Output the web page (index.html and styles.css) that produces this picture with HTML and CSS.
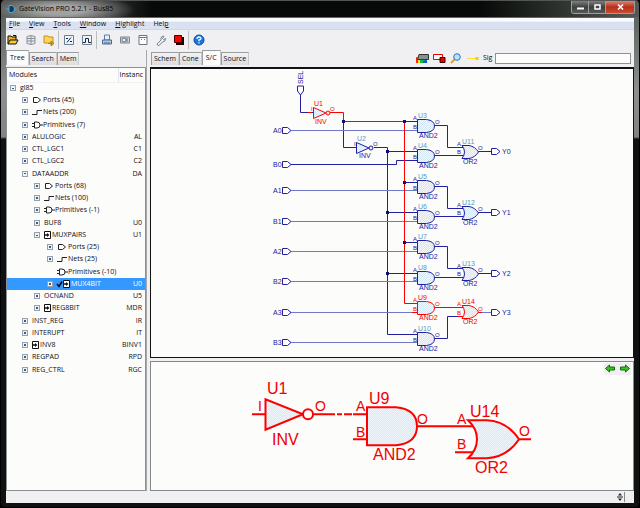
FILE: index.html
```html
<!DOCTYPE html>
<html lang="en">
<head>
<meta charset="utf-8">
<title>GateVision PRO 5.2.1 - Bus85</title>
<link rel="stylesheet" href="styles.css">
</head>
<body>
<svg class="defs" aria-hidden="true">
  <defs>
    <pattern id="hatch" width="2" height="2" patternUnits="userSpaceOnUse"><rect width="2" height="2" fill="#f4f8fb"/><rect width="1" height="1" fill="#d4e6f2"/><rect x="1" y="1" width="1" height="1" fill="#d4e6f2"/></pattern>
    <symbol id="i-port" viewBox="0 0 11 10"><path d="M1.500 2.500h4l3 2.500-3 2.500h-4z" fill="#fff" stroke="#222"/></symbol>
    <symbol id="i-net" viewBox="0 0 11 10"><path d="M0 7.500h5v-4h5" fill="none" stroke="#222"/></symbol>
    <symbol id="i-prim" viewBox="0 0 11 10"><path d="M0 3.500h2M0 6.500h2M8 5h3M2.500 2v6h2.500q3 0 3-3t-3-3z" fill="#fff" stroke="#222"/></symbol>
    <symbol id="i-mod" viewBox="0 0 8 10"><path d="M.5 1.500h6v7h-6z" fill="#fff" stroke="#111"/><path d="M1 5h3" stroke="#111" stroke-width="1.500"/><path d="M3 3 5.500 5 3 7z" fill="#111"/></symbol>
    <symbol id="i-check" viewBox="0 0 7 10"><path d="m1 5 2 2.500 3-5" fill="none" stroke="#001" stroke-width="1.500"/></symbol>
    <symbol id="and" viewBox="0 0 18 14" overflow="visible"><path d="M.5.500h9q8 1 8 6.500t-8 6.500h-9z"/></symbol>
    <symbol id="or" viewBox="0 0 17 14" overflow="visible"><path d="M0 .500h7q6 1 9.500 6.500-3.500 5.500-9.500 6.500h-7q5-6.500 0-13z"/></symbol>
    <symbol id="inv" viewBox="0 0 18 12" overflow="visible"><path d="M.5.500v11L13 6z"/><circle cx="15" cy="6" r="2"/></symbol>
    <symbol id="pin" viewBox="0 0 9 7" overflow="visible"><path d="M.5.500h5l3.500 3-3.500 3h-5z" fill="#fff"/></symbol>
  </defs>
</svg>
<div class="window">
  <header class="titlebar">
    <svg class="logo" viewBox="0 0 10 10"><path d="M0 5h3M8 5h2M3 1.500h3q2.500 1 2.500 3.500t-2.500 3.500h-3z" fill="#173a50" stroke="#4aa7d8"/></svg>
    <h1>GateVision PRO 5.2.1 - Bus85</h1>
    <div class="winbtns">
      <button aria-label="Minimize"><svg viewBox="0 0 9 8"><path d="M1 5.500h7" stroke="#fff" stroke-width="2"/></svg></button>
      <button aria-label="Maximize"><svg viewBox="0 0 9 8"><path d="M2 2h5v4h-5z" fill="none" stroke="#fff" stroke-width="1.500"/></svg></button>
      <button class="close" aria-label="Close"><svg viewBox="0 0 9 8"><path d="m2 1.500 5 5m0-5-5 5" stroke="#fff" stroke-width="1.700"/></svg></button>
    </div>
  </header>
  <div class="client">
    <nav class="menu">
      <button><u>F</u>ile</button><button><u>V</u>iew</button><button><u>T</u>ools</button><button><u>W</u>indow</button><button><u>H</u>ighlight</button><button>Hel<u>p</u></button>
    </nav>
    <div class="toolbar">
      <button aria-label="Open"><svg viewBox="0 0 12 12"><path d="M1 10V2h3l1 1h4v3" fill="#e8b420" stroke="#111"/><path d="m1 10 2-4h8l-2 4z" fill="#ffc82c" stroke="#111"/><path d="M6 1.500h3v2" fill="none" stroke="#111"/></svg></button>
      <button aria-label="Database"><svg viewBox="0 0 12 12"><path d="M2 2.500q4-2 8 0v7q-4 2-8 0z" fill="#e9ecee" stroke="#879098"/><path d="M2 4.500h8M2 7h8M6 2v8" stroke="#879098"/></svg></button>
      <button aria-label="Load file"><svg viewBox="0 0 12 12"><path d="M1 9V2h4l1 1h4v6z" fill="#ffd45a" stroke="#c18e1c"/><path d="M5 9.500h4M8 7l3 2.500L8 12z" fill="#e0a010" stroke="#b57c10"/></svg></button>
      <span class="sep"></span>
      <button aria-label="Percent"><svg viewBox="0 0 12 12"><path d="M1.500 1.500h9v9h-9z" fill="#eef4fb" stroke="#6a7f98"/><path d="m8 3.500-4 5" stroke="#222"/><path d="M3 4h2v1H3zM7 7h2v1H7z" fill="#222"/></svg></button>
      <button aria-label="Waveform"><svg viewBox="0 0 12 12"><path d="M1.500 1.500h9v9h-9z" fill="#eef4fb" stroke="#6a7f98"/><path d="M2 8.500h2.500v-4h3v4H10" fill="none" stroke="#223"/></svg></button>
      <span class="sep"></span>
      <button aria-label="Print"><svg viewBox="0 0 12 12"><path d="M3.500 1h5v5h-5z" fill="#e5f1ff" stroke="#567fae"/><path d="M1.500 6h9v4h-9z" fill="#b7c5d4" stroke="#546b83"/><path d="M3 9h6" stroke="#2a72c4"/></svg></button>
      <button aria-label="Snapshot"><svg viewBox="0 0 12 12"><path d="M1.500 3h9v6h-9z" fill="#ccd6de" stroke="#788792"/><circle cx="5" cy="6" r="2" fill="#eef" stroke="#63717c"/><path d="M8 4v4" stroke="#63717c"/></svg></button>
      <button aria-label="Page"><svg viewBox="0 0 12 12"><path d="M2 1.500h8v9H2z" fill="#fff" stroke="#687785"/><path d="M2 3.500h8M4 5.500h1m2 0h1" stroke="#687785"/></svg></button>
      <button aria-label="Settings"><svg viewBox="0 0 12 12"><path d="m2 10 4-4q-1-3 2-4l1 .5-1.500 2 1 1 2-1q.5 3-3 3.500l-4 4z" fill="#eef1f4" stroke="#74808b"/></svg></button>
      <button aria-label="Highlight color"><svg viewBox="0 0 12 12"><path d="M3 3h8v8H3z" fill="#200"/><path d="M1.500 1.500h7v7h-7z" fill="#f00" stroke="#500"/></svg></button>
      <span class="sep"></span>
      <button aria-label="Help"><svg viewBox="0 0 12 12"><circle cx="6" cy="6" r="5" fill="#1976df" stroke="#0b4ca6"/><path d="M4 5q0-2 2-2t2 1.500Q8 5.500 6 6v1.200M6 8.200v1.300" fill="none" stroke="#fff" stroke-width="1.300"/></svg></button>
    </div>
    <div class="workspace">
      <section class="side">
        <div class="tabs"><button class="on">Tree</button><button>Search</button><button>Mem</button></div>
        <div class="treepane">
          <table>
            <thead><tr><th>Modules</th><th class="inst">Instanc</th></tr></thead>
            <tbody>
              <tr><td><div class="l0"><button class="ex minus" aria-label="Collapse"></button>gl85</div></td><td></td></tr>
              <tr><td><div class="l1"><button class="ex" aria-label="Expand"></button><svg class="ic"><use href="#i-port"/></svg>Ports (45)</div></td><td></td></tr>
              <tr><td><div class="l1"><button class="ex" aria-label="Expand"></button><svg class="ic"><use href="#i-net"/></svg>Nets (200)</div></td><td></td></tr>
              <tr><td><div class="l1"><button class="ex" aria-label="Expand"></button><svg class="ic"><use href="#i-prim"/></svg>Primitives (7)</div></td><td></td></tr>
              <tr><td><div class="l1"><button class="ex" aria-label="Expand"></button>ALULOGIC</div></td><td>AL</td></tr>
              <tr><td><div class="l1"><button class="ex" aria-label="Expand"></button>CTL_LGC1</div></td><td>C1</td></tr>
              <tr><td><div class="l1"><button class="ex" aria-label="Expand"></button>CTL_LGC2</div></td><td>C2</td></tr>
              <tr><td><div class="l1"><button class="ex minus" aria-label="Collapse"></button>DATAADDR</div></td><td>DA</td></tr>
              <tr><td><div class="l2"><button class="ex" aria-label="Expand"></button><svg class="ic"><use href="#i-port"/></svg>Ports (68)</div></td><td></td></tr>
              <tr><td><div class="l2"><button class="ex" aria-label="Expand"></button><svg class="ic"><use href="#i-net"/></svg>Nets (100)</div></td><td></td></tr>
              <tr><td><div class="l2"><button class="ex" aria-label="Expand"></button><svg class="ic"><use href="#i-prim"/></svg>Primitives (-1)</div></td><td></td></tr>
              <tr><td><div class="l2"><button class="ex" aria-label="Expand"></button>BUF8</div></td><td>U0</td></tr>
              <tr><td><div class="l2"><button class="ex minus" aria-label="Collapse"></button><svg class="mod"><use href="#i-mod"/></svg>MUXPAIRS</div></td><td>U1</td></tr>
              <tr><td><div class="l3"><button class="ex" aria-label="Expand"></button><svg class="ic"><use href="#i-port"/></svg>Ports (25)</div></td><td></td></tr>
              <tr><td><div class="l3"><button class="ex" aria-label="Expand"></button><svg class="ic"><use href="#i-net"/></svg>Nets (25)</div></td><td></td></tr>
              <tr><td><div class="l3"><span class="ex none"></span><svg class="ic"><use href="#i-prim"/></svg>Primitives (-10)</div></td><td></td></tr>
              <tr class="sel"><td><div class="l3"><button class="ex" aria-label="Expand"></button><svg class="check"><use href="#i-check"/></svg><svg class="mod"><use href="#i-mod"/></svg>MUX4BIT</div></td><td>U0</td></tr>
              <tr><td><div class="l2"><button class="ex" aria-label="Expand"></button>OCNAND</div></td><td>U5</td></tr>
              <tr><td><div class="l2"><button class="ex" aria-label="Expand"></button><svg class="mod"><use href="#i-mod"/></svg>REG8BIT</div></td><td>MDR</td></tr>
              <tr><td><div class="l1"><button class="ex" aria-label="Expand"></button>INST_REG</div></td><td>IR</td></tr>
              <tr><td><div class="l1"><button class="ex" aria-label="Expand"></button>INTERUPT</div></td><td>IT</td></tr>
              <tr><td><div class="l1"><button class="ex" aria-label="Expand"></button><svg class="mod"><use href="#i-mod"/></svg>INV8</div></td><td>BINV1</td></tr>
              <tr><td><div class="l1"><button class="ex" aria-label="Expand"></button>REGPAD</div></td><td>RPD</td></tr>
              <tr><td><div class="l1"><button class="ex" aria-label="Expand"></button>REG_CTRL</div></td><td>RGC</td></tr>
            </tbody>
          </table>
        </div>
      </section>
      <section class="main">
        <div class="mainbar">
          <div class="tabs"><button>Schem</button><button>Cone</button><button class="on">S/C</button><button>Source</button></div>
          <div class="tools">
            <button aria-label="Colors"><svg viewBox="0 0 14 11"><path d="M1 4v6h10V7z" fill="#f22"/><path d="M3 6v4h8V7z" fill="#fd0"/><path d="M5 7v3h7V7z" fill="#1b4"/><path d="M8 8v2h4V7z" fill="#15d"/><path d="M4 1.500h9.500v5h-11z" fill="#8b8f8f" stroke="#333"/></svg></button>
            <button aria-label="Zoom area"><svg viewBox="0 0 14 11"><path d="M1.500 1.500h9v5h-9z" fill="#fff" stroke="#e00"/><path d="M8 4.500h5v5H8z" fill="#e00" stroke="#300"/></svg></button>
            <button aria-label="Find"><svg viewBox="0 0 14 11"><path d="m6 6-4 4" stroke="#e0a030" stroke-width="2"/><circle cx="8" cy="4" r="3.300" fill="#b9e2fb" stroke="#2878c8"/></svg></button>
            <button aria-label="Signal"><svg viewBox="0 0 14 11"><path d="M1 5.500h9" stroke="#fd3"/><path d="M9.500 4h3v3h-3z" fill="#fc0"/></svg></button>
            <label for="sig">Sig</label><input id="sig" type="text">
          </div>
        </div>
        <div class="schematic">
          <svg viewBox="151 69 482 286" preserveAspectRatio="xMidYMin" role="img" aria-label="Schematic">
            <g class="wire">
              <path d="M300.500 95v17.500H313M343.500 121v26.500H357M374 147.500h13.500v187H417M387.500 151.500H417M387.500 212.500H417M387.500 273.500H417M404 121.500h13M404 182.500h13M404 242.500h13M435 125.500h12.500v22H464M435 155.500h29M435 186.500h12.500v22H464M435 216.500h29M435 246.500h12.500v22H464M435 277.500h29M435 338.500h12.500v-22H464M478 151.500h13M478 212.500h13M478 273.500h13"/>
              <path class="pale" d="M291 130.500h126M291 190.500h126M291 221.500h126M291 251.500h126M291 281.500h126M291 312.500h126M291 342.500h126M478 312.500h13"/>
              <path d="M291 164.500h105.500v-4H417"/>
            </g>
            <path class="hot" d="M330 112.500h13.500v9h61v182H417M435 307.500h29M478 312.500h4M412 312.500h5M312 112.500h-4M458 316.500h6"/>
            <path d="M342 120h3v3h-3zM403 120h3v3h-3zM403 181h3v3h-3zM403 241h3v3h-3zM386 150h3v3h-3zM386 211h3v3h-3zM386 272h3v3h-3z" fill="#101070"/>
            <g class="gate">
              <use href="#inv" x="356" y="142" width="18" height="12"/>
              <use href="#and" x="417" y="119" width="18" height="14"/><use href="#and" x="417" y="149" width="18" height="14"/><use href="#and" x="417" y="180" width="18" height="14"/><use href="#and" x="417" y="210" width="18" height="14"/><use href="#and" x="417" y="240" width="18" height="14"/><use href="#and" x="417" y="271" width="18" height="14"/><use href="#and" x="417" y="332" width="18" height="14"/>
              <use href="#or" x="462" y="145" width="17" height="14"/><use href="#or" x="462" y="206" width="17" height="14"/><use href="#or" x="462" y="267" width="17" height="14"/>
              <use href="#pin" x="282" y="127" width="9" height="7"/><use href="#pin" x="282" y="161" width="9" height="7"/><use href="#pin" x="282" y="187" width="9" height="7"/><use href="#pin" x="282" y="218" width="9" height="7"/><use href="#pin" x="282" y="248" width="9" height="7"/><use href="#pin" x="282" y="278" width="9" height="7"/><use href="#pin" x="282" y="309" width="9" height="7"/><use href="#pin" x="282" y="339" width="9" height="7"/>
              <use href="#pin" x="491" y="148" width="9" height="7"/><use href="#pin" x="491" y="209" width="9" height="7"/><use href="#pin" x="491" y="270" width="9" height="7"/><use href="#pin" x="491" y="309" width="9" height="7"/>
              <path d="M297.500 86v5l3 4 3-4v-5z" fill="#fff"/>
            </g>
            <g class="gate red"><use href="#inv" x="313" y="107" width="18" height="12"/><use href="#and" x="417" y="301" width="18" height="14"/><use href="#or" x="462" y="305" width="17" height="14"/></g>
            <g class="name"><text x="357" y="141">U2</text><text x="418" y="118">U3</text><text x="418" y="148">U4</text><text x="418" y="179">U5</text><text x="418" y="209">U6</text><text x="418" y="239">U7</text><text x="418" y="270">U8</text><text x="418" y="331">U10</text><text x="462" y="144">U11</text><text x="462" y="205">U12</text><text x="462" y="266">U13</text></g>
            <g class="lab">
              <text transform="translate(303 84) rotate(-90)">SEL</text>
              <text x="273" y="133">A0</text><text x="273" y="167">B0</text><text x="273" y="193">A1</text><text x="273" y="224">B1</text><text x="273" y="254">A2</text><text x="273" y="284">B2</text><text x="273" y="315">A3</text><text x="273" y="345">B3</text>
              <text x="502" y="154">Y0</text><text x="502" y="215">Y1</text><text x="502" y="276">Y2</text><text x="502" y="315">Y3</text>
              <text x="359" y="158">INV</text>
              <text x="419" y="138">AND2</text><text x="419" y="168">AND2</text><text x="419" y="199">AND2</text><text x="419" y="229">AND2</text><text x="419" y="259">AND2</text><text x="419" y="290">AND2</text><text x="419" y="351">AND2</text>
              <text x="463" y="164">OR2</text><text x="463" y="225">OR2</text><text x="463" y="286">OR2</text>
            </g>
            <g class="tiny">
              <text x="373" y="146">O</text><text x="354" y="146">I</text>
              <text x="413" y="120">A</text><text x="413" y="129">B</text><text x="435" y="124">O</text>
              <text x="413" y="150">A</text><text x="413" y="159">B</text><text x="435" y="154">O</text>
              <text x="413" y="181">A</text><text x="413" y="190">B</text><text x="435" y="185">O</text>
              <text x="413" y="211">A</text><text x="413" y="220">B</text><text x="435" y="215">O</text>
              <text x="413" y="241">A</text><text x="413" y="250">B</text><text x="435" y="245">O</text>
              <text x="413" y="272">A</text><text x="413" y="281">B</text><text x="435" y="276">O</text>
              <text x="413" y="333">A</text><text x="413" y="342">B</text><text x="435" y="337">O</text>
              <text x="457" y="146">A</text><text x="457" y="154">B</text><text x="478" y="150">O</text>
              <text x="457" y="207">A</text><text x="457" y="215">B</text><text x="478" y="211">O</text>
              <text x="457" y="268">A</text><text x="457" y="276">B</text><text x="478" y="272">O</text>
            </g>
            <g class="lab redtext"><text x="314" y="106">U1</text><text x="315" y="124">INV</text><text x="418" y="300">U9</text><text x="419" y="320">AND2</text><text x="462" y="304">U14</text><text x="463" y="324">OR2</text></g>
            <g class="tiny redtext"><text x="330" y="111">O</text><text x="311" y="111">I</text><text x="413" y="302">A</text><text x="413" y="311">B</text><text x="435" y="306">O</text><text x="457" y="306">A</text><text x="457" y="315">B</text><text x="478" y="311">O</text></g>
          </svg>
        </div>
        <div class="cone">
          <svg viewBox="151 361 482 128" role="img" aria-label="Cone view">
            <g class="big">
              <path d="M252 413h13M313 413h22M337 413h5M344 413h8M353 413h13M353 438h13M417 425h56M455 451h18M519 438h12"/>
              <path class="fill" d="M265.500 398v30.500L303 413zM367 406v38h29q21-2 21-19t-21-19zM468 419h19q20 1 32 19-12 18-32 19h-19c12-11 12-27 0-38z"/>
              <circle cx="308" cy="413" r="5" fill="#fff"/>
            </g>
            <g class="bigtext"><text x="267" y="393">U1</text><text x="272" y="444">INV</text><text x="369" y="403">U9</text><text x="373" y="459">AND2</text><text x="470" y="416">U14</text><text x="475" y="472">OR2</text></g>
            <g class="bigtext pinname"><text x="258" y="410">I</text><text x="315" y="410">O</text><text x="356" y="410">A</text><text x="356" y="436">B</text><text x="417" y="423">O</text><text x="457" y="423">A</text><text x="457" y="448">B</text><text x="519" y="435">O</text></g>
          </svg>
          <div class="history">
            <button aria-label="Back"><svg viewBox="0 0 10 9"><path d="M.5 4.500 4.500 1v2h5v3h-5v2z" fill="#35c420" stroke="#176810"/></svg></button>
            <button aria-label="Forward"><svg viewBox="0 0 10 9"><path d="M9.500 4.500 5.500 1v2h-5v3h5v2z" fill="#35c420" stroke="#176810"/></svg></button>
          </div>
        </div>
      </section>
    </div>
    <footer class="status"><button aria-label="Resize messages"><svg viewBox="0 0 8 10"><path d="M0 5h6" stroke="#222"/><path d="M1 3.500 3 1l2 2.500zM1 6.500 3 9l2-2.500z" fill="#222"/><path d="M7.500 0v10" stroke="#888"/></svg></button></footer>
  </div>
</div>
</body>
</html>
```
FILE: styles.css
```css
* { box-sizing: border-box; }
html, body { height: 100%; margin: 0; }
body { font: 7px/10px "Open Sans", "Noto Sans", sans-serif; color: #0c0c20; background: #000; }
button { font: inherit; color: inherit; background: none; border: 0; padding: 0; margin: 0; display: flex; align-items: center; justify-content: center; }
svg { display: block; }
.defs { position: absolute; width: 0; height: 0; }

.window { min-height: 100vh; display: flex; flex-direction: column; padding: 0 5px 4px; background: linear-gradient(#555b58, #8d908e 90px, #808381 136px, #101211 138px, #101211); border: 1px solid #000; border-radius: 5px; border-top-color: #555; }
.titlebar { height: 17px; margin: 0 -5px; padding-left: 5px; display: flex; align-items: center; gap: 3px; background: radial-gradient(ellipse 74px 16px at 60px 9px, #a0a3a1 30%, transparent 100%), linear-gradient(90deg, #4c504e, #2b2e2c 110px, #070a08 150px, #070a08 480px, #555a57); border-bottom: 1px solid #636664; border-radius: 4px 4px 0 0; }
.titlebar h1 { margin: 0; font-size: 7px; font-weight: 400; color: #000; flex: 1; }
.logo { width: 10px; height: 10px; }
.winbtns { display: flex; align-self: flex-start; margin-right: 4px; border: 1px solid #9b9e9c; border-top: 0; border-radius: 0 0 3px 3px; overflow: hidden; }
.winbtns button { width: 17px; height: 12px; background: linear-gradient(#7d807e, #3c3f3d 50%, #555957); border-right: 1px solid #9b9e9c; }
.winbtns svg { width: 9px; height: 8px; }
.winbtns .close { width: 28px; border: 0; background: linear-gradient(#d98878, #b92e18 50%, #c94c30); }

.client { flex: 1; display: flex; flex-direction: column; background: #f0f0f2; min-height: 0; }
.menu { height: 12px; display: flex; gap: 9px; padding-left: 3px; align-items: center; background: linear-gradient(#fafbfd 30%, #d8dfee 35%, #dce2f1); border-bottom: 1px solid #cfd5e2; }
.toolbar { height: 20px; display: flex; align-items: center; gap: 6px; padding-left: 1px; }
.toolbar button, .toolbar svg { width: 12px; height: 12px; }
.toolbar .sep { width: 1px; height: 18px; background: #bcbec2; margin: 0 -2px 0 -3px; }

.workspace { flex: 1; display: flex; gap: 3px; min-height: 0; }
.side { flex: 0 0 141px; display: flex; flex-direction: column; border-right: 1px solid #a6a8aa; }
.tabs { display: flex; align-items: flex-end; height: 15px; }
.tabs button { height: 13px; padding: 0 2px; border: 1px solid #9a9c9e; border-bottom: 0; border-right-color: #c8cacc; background: linear-gradient(#f4f4f4, #dcdcde); }
.tabs .on { height: 15px; padding: 0 3px; background: #fcfcfc; }
.treepane { flex: 1; background: #fcfcfb; border: 1px solid #8b9096; margin-top: 2px; overflow: hidden; }
table { width: 100%; table-layout: fixed; border-collapse: collapse; }
th { height: 14px; padding: 0 0 0 2px; font-weight: 400; text-align: left; white-space: nowrap; border-bottom: 1px solid #eef2f5; }
th.inst { width: 27px; padding-left: 1px; border-left: 1px solid #dfe5ea; }
tbody td { height: 12px; padding: 0; white-space: nowrap; }
tbody tr:nth-child(4n) td { height: 13px; }
tbody td:last-child { text-align: right; padding-right: 3px; }
td div { display: flex; align-items: center; }
.l0 { padding-left: 3px; }
.l1 { padding-left: 15px; }
.l2 { padding-left: 27px; }
.l3 { padding-left: 40px; }
.ex { width: 6px; height: 6px; margin-right: 4px; flex: none; border: 1px solid #97a1ad; background: linear-gradient(#3a5c92, #3a5c92) center / 2px 2px no-repeat, #eef2f7; }
.ex.minus { background-size: 2px 1px; }
.ex.none { visibility: hidden; }
.ic { width: 11px; height: 10px; }
.mod { width: 8px; height: 10px; }
.check { width: 7px; height: 10px; margin-left: -1px; }
.sel { background: #3399ff; color: #fff; }

.main { flex: 1; min-width: 0; display: flex; flex-direction: column; }
.mainbar { display: flex; align-items: flex-end; justify-content: space-between; padding-left: 1px; }
.tools { display: flex; align-items: center; gap: 3px; height: 14px; flex: 0 1 219px; padding-right: 3px; }
.tools svg { width: 14px; height: 11px; }
.tools input { flex: 1; min-width: 0; height: 11px; border: 1px solid #8a9396; background: #fcfcfb; font: inherit; padding: 0 2px; }
.schematic { flex: 291 0 0; min-height: 0; margin-top: 2px; border: 1px solid #111; border-width: 2px 1px 1px; background: #fcfcfb; }
.schematic svg, .cone > svg { width: 100%; height: 100%; }
.cone { flex: 130 0 0; min-height: 0; margin-top: 3px; border: 1px solid #84898b; background: #fcfcfb; position: relative; }
.history { position: absolute; top: 1px; right: 2px; height: 12px; display: flex; gap: 5px; padding: 0 1px; align-items: center; background: #f0f0f2; }
.history svg { width: 10px; height: 9px; }
.status { height: 12px; display: flex; align-items: center; justify-content: flex-end; padding-right: 9px; }
.status svg { width: 8px; height: 10px; }

.wire, .gate { fill: none; stroke: #2020a0; stroke-width: 1; }
.pale { stroke: #7078c8; }
.gate { fill: url(#hatch); }
.hot { fill: none; stroke: #ff0000; stroke-width: 1; }
.red { stroke: #ff0000; }
.name, .lab, .tiny, .bigtext { font-family: "Liberation Sans", sans-serif; }
.name { font-size: 7px; fill: #5a9ac4; }
.lab { font-size: 7px; fill: #2020a0; }
.tiny { font-size: 6px; fill: #2020a0; }
.lab.redtext, .tiny.redtext, .bigtext { fill: #f00000; }
.big { fill: none; stroke: #ff0000; stroke-width: 2; }
.big .fill { fill: url(#hatch); }
.bigtext { font-size: 16px; }
.pinname { font-size: 14px; }
```
